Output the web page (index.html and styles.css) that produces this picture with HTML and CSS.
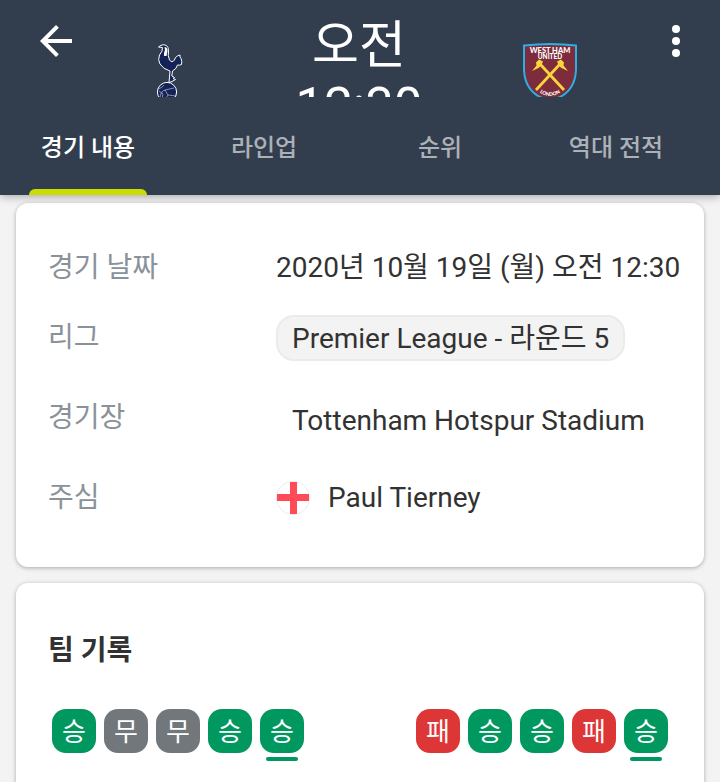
FILE: index.html
```html
<!DOCTYPE html>
<html lang="ko">

<head>
    <meta charset="UTF-8">
    <meta name="viewport" content="width=device-width, initial-scale=1.0">
    <title>토트넘 - 웨스트햄</title>
    <link rel="stylesheet" href="styles.css">
</head>

<body>
    <header class="header">
        <div class="topbar">
            <button class="icon-btn" type="button" aria-label="뒤로">
                <svg width="48" height="48" viewBox="0 0 24 24">
                    <path fill="#fff" d="M20 11H7.83l5.59-5.59L12 4l-8 8 8 8 1.41-1.41L7.83 13H20z" />
                </svg>
            </button>
            <div class="match">
                <svg class="crest" width="54" height="64" viewBox="0 0 54 64" role="img" aria-label="Tottenham">
                    <circle cx="26" cy="49" r="9.6" fill="#132257" stroke="#fff" stroke-width="1" />
                    <path fill="none" stroke="#fff" stroke-width=".5"
                        d="M17 46q4-1 6-4M19 54q1-6 5-7l9-2M24 47l3 5 8 1M27 52l-4 6M18 48l4 3-1 5" />
                    <path fill="#132257" stroke="#fff" stroke-width="1" stroke-linejoin="round"
                        d="M17.500 4L20 2.300Q23 1 25.500 2.500Q27.600 4 27.500 8Q26.500 13 28.500 17Q30 19.500 32 18.500Q33.500 17.500 34.500 14.500Q36.500 12.500 39 12Q38.500 14 40 15.500Q41.300 18 40.500 21.500Q38.500 22.500 36.500 22Q35.500 26 31.500 28L30.800 33L33.500 34.500L32 35.500L34.500 36.500L31 38.500L28 39.500L29 28Q22 26 19 21Q16.500 17 18.500 12Q22 8 21.500 4.500Z" />
                    <path fill="#fff" d="M23.500 4Q26.500 4 26.500 8L25.500 13H23Q22.500 10 24 7Z" />
                </svg>
                <p class="kickoff">오전 12:30</p>
                <svg class="crest" width="54" height="64" viewBox="0 0 54 64" role="img" aria-label="West Ham United">
                    <path fill="#7c2c3b" stroke="#2dafe5" stroke-width="2"
                        d="M1 2.600Q27 -.600 53 2.600V27Q52 47 36 54.500L27 60L18 54.500Q2 47 1 27Z" />
                    <text class="crest-text" x="27" y="9.500" font-size="7.500">WEST HAM</text>
                    <text class="crest-text" x="27" y="15.500" font-size="6.500">UNITED</text>
                    <g id="hammer">
                        <path stroke="#f9d43c" stroke-width="2.800" d="M13 47L37 21" />
                        <path fill="#f9d43c" d="M34 18.500L38 16.500L41 19.500L40.500 22.500L45 28L38.500 25L36 23Z" />
                    </g>
                    <use href="#hammer" transform="translate(54 0) scale(-1 1)" />
                    <path id="arc" fill="none" d="M16 49Q27 57 38 49" />
                    <text class="crest-text" font-size="5"><textPath href="#arc" startOffset="50%">LONDON</textPath></text>
                </svg>
            </div>
            <button class="icon-btn" type="button" aria-label="더보기">
                <svg width="48" height="48" viewBox="0 0 24 24" fill="#fff">
                    <circle cx="12" cy="6" r="2" />
                    <circle cx="12" cy="12" r="2" />
                    <circle cx="12" cy="18" r="2" />
                </svg>
            </button>
        </div>
        <nav class="tabs">
            <button class="tab current" type="button">경기 내용</button>
            <button class="tab" type="button">라인업</button>
            <button class="tab" type="button">순위</button>
            <button class="tab" type="button">역대 전적</button>
        </nav>
    </header>

    <main class="content">
        <section class="card info">
            <dl>
                <div class="row">
                    <dt>경기 날짜</dt>
                    <dd>2020년 10월 19일 (월) 오전 12:30</dd>
                </div>
                <div class="row">
                    <dt>리그</dt>
                    <dd class="league"><a class="chip" href="#">Premier League - 라운드 5</a></dd>
                </div>
                <div class="row tall">
                    <dt>경기장</dt>
                    <dd class="venue">Tottenham Hotspur Stadium</dd>
                </div>
                <div class="row">
                    <dt>주심</dt>
                    <dd class="referee">
                        <svg width="34" height="34" viewBox="0 0 34 34">
                            <circle cx="17" cy="17" r="16.500" fill="#fff" stroke="#ececec" />
                            <path fill="#ff4b55" d="M14 1h7v12h12v7H21v13h-7V20H1v-7h13z" />
                        </svg>
                        <span>Paul Tierney</span>
                    </dd>
                </div>
            </dl>
        </section>

        <section class="card record">
            <h2>팀 기록</h2>
            <div class="forms">
                <ul class="form">
                    <li class="win">승</li>
                    <li class="draw">무</li>
                    <li class="draw">무</li>
                    <li class="win">승</li>
                    <li class="win last">승</li>
                </ul>
                <ul class="form">
                    <li class="lose">패</li>
                    <li class="win">승</li>
                    <li class="win">승</li>
                    <li class="lose">패</li>
                    <li class="win last">승</li>
                </ul>
            </div>
        </section>
    </main>
</body>

</html>
```

FILE: styles.css
```css
* {
    margin: 0;
    padding: 0;
    box-sizing: border-box;
}

body {
    height: 100vh;
    overflow: hidden;
    background: #f3f3f3;
    color: #323232;
    font-family: Roboto, "Noto Sans CJK KR", sans-serif;
    font-size: 28px;
    line-height: 36px;
}

button {
    border: 0;
    background: none;
    font-family: inherit;
    cursor: pointer;
}

ul {
    list-style: none;
}

/* header */
.header {
    position: relative;
    background: #323e4d;
    box-shadow: 0 2px 8px rgba(0, 0, 0, 0.3);
}

.topbar {
    display: flex;
    align-items: flex-start;
    height: 97px;
    padding: 0 20px 0 32px;
    overflow: hidden;
}

.icon-btn {
    width: 48px;
    height: 48px;
    margin-top: 17px;
}

.icon-btn svg {
    display: block;
}

.match {
    flex: 1;
    display: flex;
    justify-content: space-between;
    padding: 0 75px 0 61px;
}

.crest {
    margin-top: 43px;
}

.crest-text {
    fill: #fff;
    font-family: Lato, sans-serif;
    font-weight: 900;
    text-anchor: middle;
}

.kickoff {
    width: 160px;
    margin-top: 15px;
    color: #fff;
    font-size: 51px;
    line-height: 61px;
    text-align: center;
}

.tabs {
    display: grid;
    grid-template-columns: repeat(4, 1fr);
    padding-right: 16px;
}

.tab {
    position: relative;
    height: 98px;
    padding-bottom: 2px;
    color: #adb1b8;
    font-size: 24px;
    font-weight: 500;
}

.tab.current {
    color: #fff;
}

.tab.current::after {
    content: "";
    position: absolute;
    left: 29px;
    right: 29px;
    bottom: 0;
    height: 6px;
    border-radius: 6px 6px 0 0;
    background: #cddc00;
}

/* cards */
.content {
    display: grid;
    gap: 16px;
    padding: 8px 16px;
}

.card {
    border-radius: 12px;
    background: #fff;
    box-shadow: 0 1px 4px rgba(0, 0, 0, 0.3);
}

.info {
    padding: 29px 16px 35px 32px;
}

.row {
    display: grid;
    grid-template-columns: 228px 1fr;
    align-items: center;
    min-height: 70px;
}

.row.tall {
    min-height: 90px;
}

.row dt,
.row dd {
    padding-top: 2px;
}

.row dt {
    color: #8a9299;
}

.league {
    display: flex;
}

.chip {
    padding: 4px 14px 2px;
    border: 2px solid #ebebeb;
    border-radius: 18px;
    background: #f3f3f3;
    color: inherit;
    text-decoration: none;
}

.row .venue {
    padding: 8px 0 0 16px;
}

.referee {
    display: flex;
    align-items: center;
    gap: 18px;
}

.record {
    padding: 50px 32px;
}

.record h2 {
    font-size: 28px;
    font-weight: 700;
}

.forms {
    display: flex;
    justify-content: space-between;
    margin-top: 40px;
    padding: 0 4px;
}

.form {
    display: flex;
    gap: 8px;
}

.form li {
    position: relative;
    width: 44px;
    height: 44px;
    border-radius: 14px;
    color: #fff;
    font-size: 26px;
    line-height: 46px;
    text-align: center;
}

.form .win {
    background: #00985f;
}

.form .draw {
    background: #72777b;
}

.form .lose {
    background: #dd3636;
}

/* most recent match */
.form .last::after {
    content: "";
    position: absolute;
    left: 6px;
    right: 6px;
    bottom: -8px;
    height: 4px;
    border-radius: 2px;
    background: #00985f;
}
```
